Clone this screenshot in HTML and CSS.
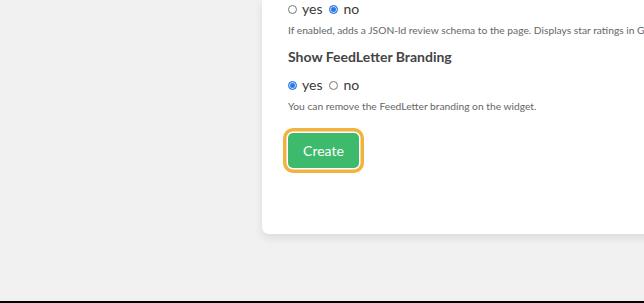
FILE: index.html
```html
<!DOCTYPE html>
<html lang="en">
<head>
    <meta charset="UTF-8">
    <title>New Widget</title>
    <meta name="viewport" content="width=device-width, initial-scale=1.0">
    <link rel="stylesheet" href="styles.css">
</head>
<body>
    <div class="page">
        <form class="card">
            <div class="field">
                <div class="radios">
                    <label><input type="radio" name="schema"> yes</label>
                    <label><input type="radio" name="schema" checked> no</label>
                </div>
                <p class="help">If enabled, adds a JSON-ld review schema to the page. Displays star ratings in Google.</p>
            </div>
            <div class="field">
                <h3>Show FeedLetter Branding</h3>
                <div class="radios">
                    <label><input type="radio" name="branding" checked> yes</label>
                    <label><input type="radio" name="branding"> no</label>
                </div>
                <p class="help">You can remove the FeedLetter branding on the widget.</p>
            </div>
            <button type="button" class="btn">Create</button>
        </form>
    </div>
</body>
</html>
```

FILE: styles.css
```css
:root {
    --bg: #f1f1f1;
    --text: #3a3a3a;
    --muted: #666;
    --green: #3dba6b;
    --orange: #f2b23e;
    --blue: #2c7be5;
}
* {
    box-sizing: border-box;
    padding: 0;
    margin: 0;
}
html, body {
    background: var(--bg);
    height: 100%;
    overflow: hidden;
}
body {
    font-family: Lato, "Noto Sans", sans-serif;
    color: var(--text);
    border-bottom: 2px solid #000;
}

/* Page */
.page {
    padding-left: 262px;
}
.card {
    width: 600px;
    height: 234px;
    background: #fff;
    border-radius: 0 0 0 7px;
    box-shadow: 0 4px 10px rgba(0, 0, 0, 0.09);
    padding: 0 26px;
}

/* Fields */
.field h3 {
    font-size: 14px;
    font-weight: 700;
    color: #444;
    line-height: 20px;
}
.radios {
    display: flex;
    gap: 7px;
    font-size: 14px;
    line-height: 18px;
}
.field + .field .radios {
    margin-top: 9px;
}
.radios label {
    display: flex;
    align-items: center;
    gap: 5px;
}
.radios input {
    appearance: none;
    width: 9px;
    height: 9px;
    border: 1px solid #777;
    border-radius: 50%;
    background: #fff;
    margin-top: 1px;
}
.radios input:checked {
    border-color: var(--blue);
    background: var(--blue);
    box-shadow: inset 0 0 0 1px #cfe0fb;
}
.help {
    font-size: 10.25px;
    color: var(--muted);
    line-height: 14px;
    margin-top: 5px;
    margin-bottom: 10px;
    white-space: nowrap;
}

/* Button */
.btn {
    margin-top: 10px;
    width: 71px;
    height: 35px;
    border: none;
    border-radius: 5px;
    background: var(--green);
    color: #fff;
    font-family: inherit;
    font-size: 14px;
    box-shadow: 0 0 0 1.5px #fff, 0 0 0 5px var(--orange);
    cursor: pointer;
}
```
